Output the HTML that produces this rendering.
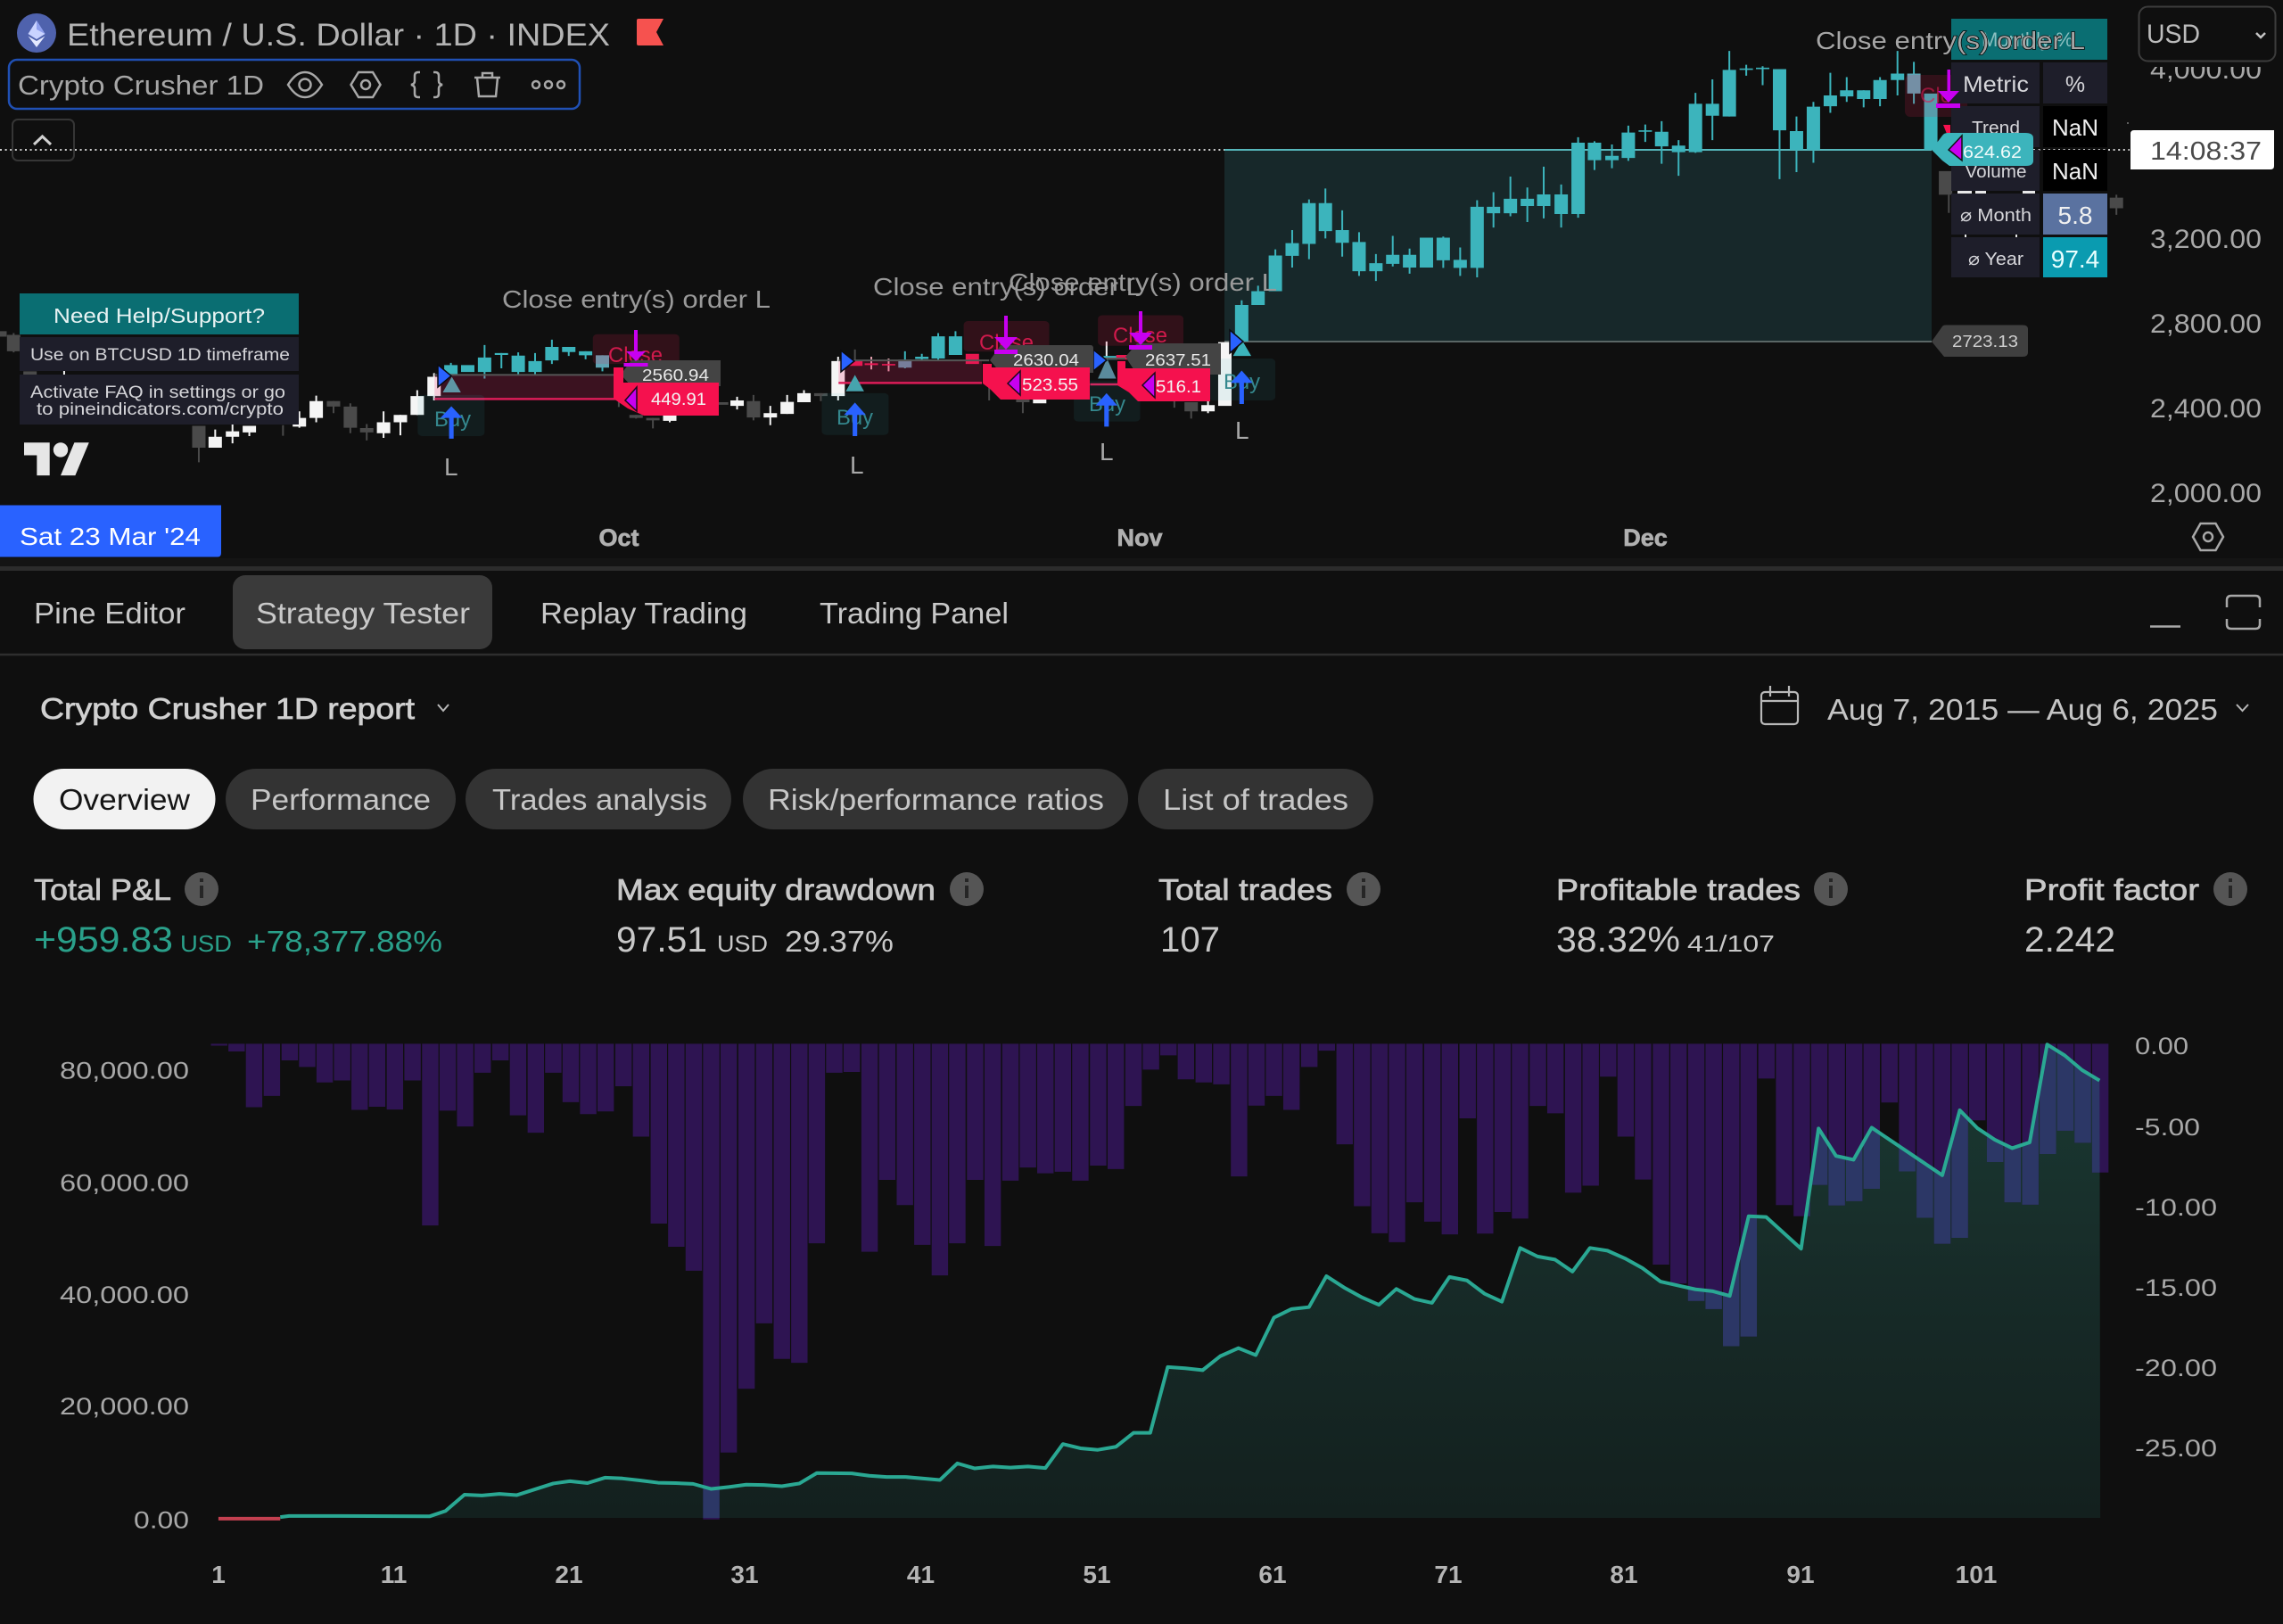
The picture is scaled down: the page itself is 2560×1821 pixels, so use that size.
<!DOCTYPE html>
<html lang="en"><head><meta charset="utf-8"><title>Ethereum Strategy Tester</title>
<style>
html,body{margin:0;padding:0;background:#0f0f0f;width:2560px;height:1821px;overflow:hidden}
svg{display:block}
text{font-family:"Liberation Sans",sans-serif}
.n{vector-effect:non-scaling-stroke;fill:none}
.ic{fill:none;stroke:#a8a8a8;stroke-width:2.5}
.semi{stroke-width:.7}
</style></head><body>
<svg xmlns="http://www.w3.org/2000/svg" width="2560" height="1821" viewBox="0 0 2560 1821">
<defs>
<linearGradient id="ag" x1="0" y1="0" x2="0" y2="1"><stop offset="0" stop-color="#1a3a33"/><stop offset=".5" stop-color="#172b28"/><stop offset="1" stop-color="#13201e"/></linearGradient>
<clipPath id="axisclip"><rect x="2380" y="75" width="180" height="560"/></clipPath>
<clipPath id="areaclip"><path d="M300 1296L385 1294 397 1291 445 1291 590 1292 612 1278 638 1236 662 1238 686 1234 710 1237 735 1222 760 1207 783 1201 807 1206 831 1192 855 1194 879 1199 904 1205 928 1206 952 1208 977 1221 1001 1216 1025 1210 1049 1211 1074 1214 1098 1207 1122 1180 1170 1181 1194 1187 1218 1190 1243 1190 1291 1198 1315 1155 1339 1168 1364 1163 1388 1166 1412 1163 1436 1167 1460 1105 1484 1116 1508 1120 1533 1112 1557 1076 1580 1076 1604 906 1628 909 1652 914 1676 878 1701 857 1725 875 1750 778 1774 756 1798 751 1822 671 1846 700 1870 725 1894 745 1918 704 1943 730 1967 740 1991 673 2015 682 2039 716 2063 737 2088 598 2112 620 2136 628 2160 659 2184 598 2208 605 2232 625 2256 650 2281 685 2305 695 2329 705 2353 710 2376 722 2402 516 2426 518 2474 600 2498 289 2522 360 2546 370 2571 287 2668 410 2692 242 2716 288 2740 318 2764 340 2788 325 2812 72 2836 100 2860 138 2884 165 2885 1296Z"/></clipPath>
</defs>
<rect width="2560" height="1821" fill="#0f0f0f"/>

<!-- profit zone -->
<rect x="1373" y="168" width="793" height="215" fill="#17282a"/>
<path d="M1373 168H2166" stroke="#56b6bb" stroke-width="2"/>
<path d="M1373 383H2166" stroke="#5a6665" stroke-width="2"/>
<path d="M0 168H1373" stroke="#d0d0d0" stroke-width="2" stroke-dasharray="2 3.6"/>
<path d="M2280 168H2388" stroke="#d0d0d0" stroke-width="2" stroke-dasharray="2 3.6"/>

<!-- candles section 1 -->
<g transform="scale(.5102 .40816)">
<path class="n" stroke="#4a4a4a" stroke-width="2" d="M30 915V968M437 1170V1270M622 1168V1197M733 1102V1135M770 1108V1190M806 1165V1210M1398 1140V1150M1435 1148V1177M1360 1100V1118"/>
<path class="n" stroke="#4a4a4a" stroke-width="15" d="M30 920V965M0 910V925M66 1020V1030M437 1170V1230M733 1102V1117M770 1117V1175M806 1176V1188M1398 1140V1148M1435 1148V1155"/>
<path class="n" stroke="#f5f5f5" stroke-width="2" d="M141 1018V1030M473 1180V1230M511 1165V1218M548 1170V1198M658 1130V1175M695 1087V1160M843 1130V1203M880 1140V1196M917 1072V1140M954 1025V1100M1472 1140V1160"/>
<path class="n" stroke="#f5f5f5" stroke-width="15" d="M473 1200V1230M511 1185V1200M548 1170V1188M658 1148V1172M695 1102V1148M843 1160V1190M880 1140V1160M917 1088V1140M954 1035V1088M1472 1140V1156"/>
<path class="n" stroke="#3cb4bc" stroke-width="2" d="M991 997V1030M1065 948V1040M1102 970V1012M1139 968V1030M1176 970V1028M1213 933V1000M1250 953V978M1287 965V987M1324 976V1020"/>
<path class="n" stroke="#3cb4bc" stroke-width="15" d="M991 1003V1028M1028 1003V1022M1065 982V1022M1102 970V975M1139 977V1022M1176 992V1022M1213 953V990M1250 953V967M1287 965V976"/>
<path class="n" stroke="#5fa5b5" stroke-width="15" d="M1324 976V1010"/>
</g>
<!-- candles section 2 -->
<g transform="translate(800 0) scale(.5102 .40816)">
<path class="n" stroke="#4a4a4a" stroke-width="2" d="M88 1085V1155M236 1080V1102M311 960V1000M606 1050V1100M680 1095V1135M1013 1100V1120M1050 1105V1150"/>
<path class="n" stroke="#4a4a4a" stroke-width="15" d="M18 1105V1112M88 1102V1147M236 1080V1088M680 1095V1105M1050 1105V1130"/>
<path class="n" stroke="#f5f5f5" stroke-width="2" d="M52 1090V1125M125 1115V1168M162 1085V1137M199 1072V1105M274 980V1100M864 938V980M1087 1100V1135"/>
<path class="n" stroke="#e3a0ae" stroke-width="2" d="M347 980V1015M385 985V1020"/>
<path class="n" stroke="#e8174f" stroke-width="15" d="M347 998V1003M385 1000V1004M313 992V1005"/>
<path class="n" stroke="#f5f5f5" stroke-width="15" d="M52 1100V1115M125 1135V1147M162 1104V1137M199 1080V1105M274 992V1088M717 1097V1108M1087 1113V1130M1124 940V1115"/>
<path class="n" stroke="#3cb4bc" stroke-width="2" d="M458 972V992M494 915V990M532 910V975M1161 825V838M1197 785V838M1235 685V800M1272 632V735M1309 548V712M1345 518V655M1382 578V705M1419 638V758M1456 698V772M1493 648V732M1530 683V752M421 965V1012"/>
<path class="n" stroke="#3cb4bc" stroke-width="15" d="M458 980V986M494 924V985M532 924V975M872 978V988M1161 838V938M1197 800V838M1235 702V800M1272 668V703M1309 558V670M1345 558V635M1382 632V667M1419 665V745M1456 723V745M1493 700V725M1530 700V735M1567 653V735"/>
<path class="n" stroke="#5a96a8" stroke-width="15" d="M421 988V1010"/>
<path class="n" stroke="#e8174f" stroke-width="15" d="M569 972V1000M900 975V988"/>
</g>
<!-- candles section 3 -->
<g transform="translate(1600 0) scale(.6122 .40816)">
<path class="n" stroke="#4a4a4a" stroke-width="2" d="M956 535V585M1263 535V590"/>
<path class="n" stroke="#4a4a4a" stroke-width="15" d="M950 470V535M1263 543V572"/>
<path class="n" stroke="#3cb4bc" stroke-width="2" d="M30 650V736M61 680V758M92 550V762M122 528V625M153 485V594M184 515V610M214 458V600M246 507V625M277 377V598M307 388V467M339 397V462M369 345V442M400 342V390M430 333V450M461 385V483M492 255V420M523 218V385M554 140V320M585 178V208M615 182V234M646 190V492M677 320V473M708 280V447M739 200V310M769 212V280M800 248V295M830 212V292M862 140V262M892 170V285"/>
<path class="n" stroke="#3cb4bc" stroke-width="15" d="M30 653V715M61 714V736M92 568V736M122 568V586M153 546V586M184 546V566M214 534V566M246 534V588M277 392V588M307 392V440M339 428V440M369 364V434M400 358V362M430 362V402M461 400V418M492 285V418M523 285V318M554 192V320M585 188V192M615 186V190M646 190V358M677 360V412M708 293V412M739 262V292M769 248V265M800 248V272M830 220V272M862 202V220M923 257V412"/>
<path class="n" stroke="#5fa5b5" stroke-width="15" d="M892 202V257"/>
</g>
<circle cx="2386" cy="138" r="1" fill="#777"/>

<!-- trade 1 overlay -->
<g transform="scale(.5102 .40816)">
<rect x="955" y="1030" width="405" height="66" fill="#e91e63" fill-opacity=".2"/>
<path class="n" stroke="#555" stroke-width="2" d="M955 1030H1365"/>
<path class="n" stroke="#dd1c58" stroke-width="2.5" d="M955 1096H1360"/>
<rect x="1303" y="918" width="190" height="82" rx="10" fill="#e91e50" fill-opacity=".16"/>
<rect x="918" y="1085" width="147" height="113" rx="10" fill="#3cb4bc" fill-opacity=".09"/>
</g>
<g transform="translate(800 0) scale(.5102 .40816)">
<rect x="275" y="990" width="315" height="62" fill="#e91e63" fill-opacity=".2"/>
<path class="n" stroke="#555" stroke-width="2" d="M275 990H606M860 985H905"/>
<path class="n" stroke="#dd1c58" stroke-width="2.5" d="M275 1052H590M828 1056H890"/>
<rect x="550" y="882" width="188" height="84" rx="10" fill="#e91e50" fill-opacity=".16"/>
<rect x="845" y="866" width="188" height="84" rx="10" fill="#e91e50" fill-opacity=".16"/>
<rect x="238" y="1080" width="147" height="115" rx="10" fill="#3cb4bc" fill-opacity=".09"/>
<rect x="792" y="1045" width="146" height="113" rx="10" fill="#3cb4bc" fill-opacity=".09"/>
<rect x="1088" y="985" width="147" height="115" rx="10" fill="#3cb4bc" fill-opacity=".09"/>
</g>

<!-- Close / Buy text -->
<g fill="#d01a4c" font-size="24">
<text x="682" y="406" textLength="61" lengthAdjust="spacingAndGlyphs">Close</text>
<text x="1098" y="392" textLength="61" lengthAdjust="spacingAndGlyphs">Close</text>
<text x="1248" y="384" textLength="61" lengthAdjust="spacingAndGlyphs">Close</text>
</g>
<g fill="#35888e" font-size="24">
<text x="487" y="478" textLength="41" lengthAdjust="spacingAndGlyphs">Buy</text>
<text x="938" y="476" textLength="41" lengthAdjust="spacingAndGlyphs">Buy</text>
<text x="1221" y="461" textLength="41" lengthAdjust="spacingAndGlyphs">Buy</text>
<text x="1372" y="436" textLength="41" lengthAdjust="spacingAndGlyphs">Buy</text>
</g>

<!-- teal up triangles -->
<g transform="scale(.5102 .40816)"><path d="M993 1035L1013 1078H973Z" fill="#5e97a5"/></g>
<g transform="translate(800 0) scale(.5102 .40816)">
<path d="M311 1030L331 1075H291Z" fill="#46a4ae"/>
<path d="M865 985L885 1040H845Z" fill="#5a8a9c"/>
<path d="M1162 935L1182 978H1142Z" fill="#3cb4bc"/>
</g>
<!-- Blue entry arrows -->
<g fill="#2962ff">
<g transform="scale(.5102 .40816)"><path d="M987 1205V1148H968L992 1116L1016 1148H997V1205Z"/></g>
<g transform="translate(800 0) scale(.5102 .40816)">
<path d="M306 1198V1140H287L311 1106L335 1140H316V1198Z"/>
<path d="M859 1172V1114H840L864 1080L888 1114H869V1172Z"/>
<path d="M1156 1110V1052H1137L1161 1018L1185 1052H1166V1110Z"/>
</g>
</g>
<!-- Blue right triangles -->
<g fill="#2962ff" stroke="#0b0b0f" stroke-width="1.5">
<path d="M491 409L506 421.500L491 434Z"/>
<path d="M943 393L958 405L943 417Z"/>
<path d="M1226 392L1241 404L1226 416Z"/>
<path d="M1379 370L1394 383L1379 396Z"/>
</g>

<!-- gray labels -->
<g fill="#444">
<path d="M696 420L708 404H808V433H708Z"/>
<path d="M1110 404L1122 387H1223Q1226 387 1226 391V418H1122Z"/>
<path d="M1262 400L1275 385H1369V420H1275Z"/>
</g>
<g fill="#e8e8e8" font-size="18">
<text x="720" y="427" textLength="75" lengthAdjust="spacingAndGlyphs">2560.94</text>
<text x="1136" y="410" textLength="74" lengthAdjust="spacingAndGlyphs">2630.04</text>
<text x="1284" y="410" textLength="74" lengthAdjust="spacingAndGlyphs">2637.51</text>
</g>
<!-- red labels -->
<g fill="#f5114e">
<path d="M688 412H699V429H806V466H722L704 458L688 447Z"/>
<path d="M1102 408H1112V412H1222V448H1122L1110 436L1102 430Z"/>
<path d="M1253 405H1262V413H1357V450H1276L1266 440L1253 432Z"/>
</g>
<!-- magenta stuff -->
<g fill="#c800f0" stroke="#1a0a1a" stroke-width="1.5">
<path d="M714 434L701 449L714 461Z"/>
<path d="M1144 416L1130 430L1144 443Z"/>
<path d="M1295 418L1281 432L1295 446Z"/>
</g>
<g fill="#f4f4f4" font-size="19">
<text x="730" y="454" textLength="62" lengthAdjust="spacingAndGlyphs">449.91</text>
<text x="1146" y="438" textLength="63" lengthAdjust="spacingAndGlyphs">523.55</text>
<text x="1296" y="440" textLength="51" lengthAdjust="spacingAndGlyphs">516.1</text>
</g>
<g fill="#c800f0">
<path d="M711 370h4v24h9l-11 11-11-11h9Z"/>
<path d="M699.500 407h27v4h-27Z"/>
<path d="M1126 354h4v24h11l-13 14-13-14h11Z"/>
<path d="M1115 392h26v5h-26Z"/>
<path d="M1277 349h4v24h11l-13 14-13-14h11Z"/>
<path d="M1266 387h26v5h-26Z"/>
</g>

<!-- close 4 background -->
<rect x="2136" y="84" width="70" height="47" rx="6" fill="#e91e50" fill-opacity=".16"/>
<text x="2153" y="115" fill="#d81b50" fill-opacity=".6" font-size="24">Close</text>
<path d="M2179 140H2187V151L2183 150Z" fill="#f5114e"/>

<!-- L labels -->
<g fill="#a8a8a8" font-size="28">
<text x="498" y="533">L</text>
<text x="953" y="531">L</text>
<text x="1233" y="516">L</text>
<text x="1385" y="492">L</text>
</g>
<!-- Close entry labels -->
<g fill="#9a9a9a" font-size="28">
<text x="563" y="345" textLength="301" lengthAdjust="spacingAndGlyphs">Close entry(s) order L</text>
<text x="979" y="331" textLength="301" lengthAdjust="spacingAndGlyphs">Close entry(s) order L</text>
<text x="1131" y="326" textLength="301" lengthAdjust="spacingAndGlyphs">Close entry(s) order L</text>
</g>

<!-- help panel -->
<rect x="22" y="329" width="313" height="46" fill="#0a6e72"/>
<text x="60" y="362" fill="#e6f2f2" font-size="23" textLength="237" lengthAdjust="spacingAndGlyphs">Need Help/Support?</text>
<rect x="22" y="378" width="313" height="38" fill="#1e1e2a"/>
<text x="34" y="404" fill="#d4d4d8" font-size="19" textLength="291" lengthAdjust="spacingAndGlyphs">Use on BTCUSD 1D timeframe</text>
<rect x="22" y="420" width="313" height="56" fill="#1e1e2a"/>
<text x="34" y="446" fill="#d4d4d8" font-size="19" textLength="286" lengthAdjust="spacingAndGlyphs">Activate FAQ in settings or go</text>
<text x="41" y="465" fill="#d4d4d8" font-size="19" textLength="277" lengthAdjust="spacingAndGlyphs">to pineindicators.com/crypto</text>

<!-- TV logo -->
<g transform="translate(27 488) scale(2.05)" fill="#e6e6e6"><path d="M14 22H7V11H0V4h14v18zM28 22h-8l7.500-18h8L28 22z"/><circle cx="20" cy="8" r="4"/></g>

<!-- date tag, axis -->
<path d="M0 566.500H248V620Q248 624.500 244 624.500H0Z" fill="#2962ff"/>
<text x="22" y="611" fill="#fff" font-size="28" textLength="203" lengthAdjust="spacingAndGlyphs">Sat 23 Mar '24</text>
<g fill="#b0b0b0" stroke="#b0b0b0" class="semi" font-size="27" font-weight="700" text-anchor="middle">
<text x="694" y="612">Oct</text><text x="1278" y="612">Nov</text><text x="1845" y="612">Dec</text>
</g>

<!-- header -->
<circle cx="41" cy="37" r="22" fill="#4f62ad"/>
<path d="M41 23L50.500 38L41 44L31.500 38Z" fill="#c9d3ff"/>
<path d="M41 23L50.500 38L41 33Z" fill="#8fa0ee"/>
<path d="M41 46L50.500 40.500L41 53L31.500 40.500Z" fill="#e4e9ff"/>
<text x="75" y="51" fill="#b4b4b4" font-size="35" textLength="609" lengthAdjust="spacingAndGlyphs">Ethereum / U.S. Dollar · 1D · INDEX</text>
<path d="M716 21H744L736 36L744 51H716Q714 51 714 49V23Q714 21 716 21Z" fill="#f6524f"/>

<rect x="10" y="67" width="640" height="55" rx="9" fill="#0f0f0f" stroke="#2050b4" stroke-width="2.500"/>
<text x="20" y="106" fill="#a6a6a6" font-size="31" textLength="276" lengthAdjust="spacingAndGlyphs">Crypto Crusher 1D</text>
<path class="ic" d="M323 95C330 84 336 81 342 81S354 84 361 95C354 106 348 109 342 109S330 106 323 95Z"/><circle class="ic" cx="342" cy="95" r="6.500"/>
<path class="ic" d="M393.500 95L402 81H418L426.500 95L418 109H402Z"/><circle class="ic" cx="410" cy="95" r="5"/>
<path class="ic" d="M471 81h-2q-4 0-4 4v6q0 3-4 4q4 1 4 4v6q0 4 4 4h2M486 81h2q4 0 4 4v6q0 3 4 4q-4 1-4 4v6q0 4-4 4h-2"/>
<path class="ic" d="M532 87H561M541 87V82H552V87M535 87L537 108H556L558 87"/>
<circle class="ic" cx="601" cy="95" r="4"/><circle class="ic" cx="615" cy="95" r="4"/><circle class="ic" cx="629" cy="95" r="4"/>

<rect x="14" y="134" width="69" height="46" rx="6" fill="none" stroke="#363636" stroke-width="2"/>
<path d="M38 162L47.500 153L57 162" fill="none" stroke="#d0d0d0" stroke-width="3"/>

<!-- right axis -->
<g fill="#a8a8a8" font-size="30" clip-path="url(#axisclip)">
<text x="2411" y="88" textLength="125" lengthAdjust="spacingAndGlyphs">4,000.00</text>
<text x="2411" y="278" textLength="125" lengthAdjust="spacingAndGlyphs">3,200.00</text>
<text x="2411" y="373" textLength="125" lengthAdjust="spacingAndGlyphs">2,800.00</text>
<text x="2411" y="468" textLength="125" lengthAdjust="spacingAndGlyphs">2,400.00</text>
<text x="2411" y="563" textLength="125" lengthAdjust="spacingAndGlyphs">2,000.00</text>
</g>
<rect x="2398.500" y="7.500" width="153" height="61" rx="10" fill="#0f0f0f" stroke="#3c3c3c" stroke-width="2"/>
<text x="2407" y="48" fill="#bcbcbc" font-size="30" textLength="60" lengthAdjust="spacingAndGlyphs">USD</text>
<path d="M2530 37L2535 42L2540 37" fill="none" stroke="#c4c4c4" stroke-width="2.500"/>
<path d="M2389 150Q2389 146 2393 146H2550V186Q2550 190 2546 190H2389Z" fill="#fff"/>
<text x="2411" y="179" fill="#4a4a4a" font-size="29" textLength="125" lengthAdjust="spacingAndGlyphs">14:08:37</text>
<path class="ic" d="M2459 602L2467.500 587H2484.500L2493 602L2484.500 617H2467.500Z"/><circle class="ic" cx="2476" cy="602" r="5"/>

<!-- table -->
<rect x="2188" y="21" width="175" height="46" fill="#0a6e72"/>
<text x="2222" y="52" fill="#b8dcdc" fill-opacity=".75" font-size="22">Monthly %</text>
<g fill="#1e1e2a">
<rect x="2188" y="70" width="99" height="46"/><rect x="2291" y="70" width="72" height="46"/>
<rect x="2188" y="119" width="99" height="46"/><rect x="2188" y="168" width="99" height="46"/>
<rect x="2188" y="217" width="99" height="46"/><rect x="2188" y="266" width="99" height="45"/>
</g>
<rect x="2291" y="119" width="72" height="46" fill="#000"/><rect x="2291" y="168" width="72" height="46" fill="#000"/>
<rect x="2291" y="217" width="72" height="46" fill="#5a72a0"/><rect x="2291" y="266" width="72" height="45" fill="#0a9bb0"/>
<path d="M2195 214h16v3h-16ZM2215 214h12v3h-12ZM2268 214h14v3h-14ZM2203 263h2v3h-2ZM2260 263h2v3h-2Z" fill="#e8e8e8"/>
<g fill="#d6d6da" text-anchor="middle">
<text x="2238" y="103" font-size="25" textLength="74" lengthAdjust="spacingAndGlyphs">Metric</text>
<text x="2327" y="103" font-size="25">%</text>
<text x="2238" y="150" font-size="20" textLength="54" lengthAdjust="spacingAndGlyphs">Trend</text>
<text x="2238" y="199" font-size="20" textLength="69" lengthAdjust="spacingAndGlyphs">Volume</text>
<text x="2238" y="248" font-size="20" textLength="80" lengthAdjust="spacingAndGlyphs">⌀ Month</text>
<text x="2238" y="297" font-size="20" textLength="62" lengthAdjust="spacingAndGlyphs">⌀ Year</text>
<text x="2327" y="152" font-size="26" fill="#f0f0f0">NaN</text>
<text x="2327" y="201" font-size="26" fill="#f0f0f0">NaN</text>
<text x="2327" y="251" font-size="28" fill="#f0f0f0">5.8</text>
<text x="2327" y="300" font-size="28" fill="#e8ffff">97.4</text>
</g>

<!-- top callouts -->
<path d="M2183.500 78h3.500v24h10l-12 13-12-13h10.500Z" fill="#c800f0"/>
<path d="M2171 116h27v5h-27Z" fill="#c800f0"/>
<path d="M2166 168L2178 152Q2180 149 2184 149H2271Q2280 149 2280 155V180Q2280 186 2272 186H2186L2178 180Z" fill="#3cb4bc"/>
<path d="M2200 152L2185 168L2200 180Z" fill="#c800f0" stroke="#111" stroke-width="1.500"/>
<text x="2201" y="177" fill="#f0fbfb" font-size="19" textLength="66" lengthAdjust="spacingAndGlyphs">624.62</text>
<path d="M2166 383L2178 366Q2179 364.500 2182 364.500H2268Q2274 364.500 2274 369V395Q2274 400 2268 400H2180Z" fill="#3f3f3f"/>
<text x="2189" y="389" fill="#d0d0d0" font-size="18" textLength="74" lengthAdjust="spacingAndGlyphs">2723.13</text>
<text x="2036" y="55" fill="#a6a6a6" stroke="#0a0a0a" stroke-width="1.500" paint-order="stroke" font-size="28" textLength="302" lengthAdjust="spacingAndGlyphs">Close entry(s) order L</text>

<!-- divider -->
<rect x="0" y="626" width="2560" height="9" fill="#141414"/>
<rect x="0" y="635" width="2560" height="5" fill="#2c2c2c"/>

<!-- tabs -->
<rect x="261" y="645" width="291" height="83" rx="14" fill="#3a3a3a"/>
<path d="M0 734H2560" stroke="#2e2e2e" stroke-width="2.500"/>
<g fill="#c8c8c8" font-size="33">
<text x="38" y="699" textLength="170" lengthAdjust="spacingAndGlyphs">Pine Editor</text>
<text x="287" y="699" textLength="240" lengthAdjust="spacingAndGlyphs">Strategy Tester</text>
<text x="606" y="699" textLength="232" lengthAdjust="spacingAndGlyphs">Replay Trading</text>
<text x="919" y="699" textLength="212" lengthAdjust="spacingAndGlyphs">Trading Panel</text>
</g>
<path d="M2411 702.500H2445" stroke="#a8a8a8" stroke-width="2.500"/>
<path class="ic" d="M2497 681V673Q2497 668 2502 668H2529Q2534 668 2534 673V681M2497 694V700Q2497 705 2502 705H2529Q2534 705 2534 700V694"/>

<text x="45" y="806" fill="#d0d0d0" stroke="#d0d0d0" class="semi" font-size="33" textLength="420" lengthAdjust="spacingAndGlyphs">Crypto Crusher 1D report</text>
<path d="M491 790L497 797L503 790" fill="none" stroke="#b8b8b8" stroke-width="2"/>
<rect x="1975" y="776" width="41" height="36" rx="4" fill="none" stroke="#b8b8b8" stroke-width="2.200"/>
<path d="M1975 786H2016M1985 769V781M2006 769V781" stroke="#b8b8b8" stroke-width="2.200"/>
<text x="2049" y="807" fill="#c4c4c4" font-size="33" textLength="438" lengthAdjust="spacingAndGlyphs">Aug 7, 2015 — Aug 6, 2025</text>
<path d="M2508 790L2514.500 797L2521 790" fill="none" stroke="#b8b8b8" stroke-width="2"/>

<!-- pills -->
<rect x="37.500" y="862" width="204" height="68" rx="34" fill="#f2f2f2"/>
<g fill="#333"><rect x="253" y="862" width="258" height="68" rx="34"/><rect x="522" y="862" width="298" height="68" rx="34"/><rect x="833" y="862" width="432" height="68" rx="34"/><rect x="1276" y="862" width="264" height="68" rx="34"/></g>
<text x="66" y="908" fill="#141414" font-size="33" textLength="147" lengthAdjust="spacingAndGlyphs">Overview</text>
<g fill="#c6c6c6" font-size="33">
<text x="281" y="908" textLength="202" lengthAdjust="spacingAndGlyphs">Performance</text>
<text x="552" y="908" textLength="241" lengthAdjust="spacingAndGlyphs">Trades analysis</text>
<text x="861" y="908" textLength="377" lengthAdjust="spacingAndGlyphs">Risk/performance ratios</text>
<text x="1304" y="908" textLength="208" lengthAdjust="spacingAndGlyphs">List of trades</text>
</g>

<!-- stats -->
<g fill="#c8c8c8" stroke="#c8c8c8" class="semi" font-size="33">
<text x="38" y="1009" textLength="154" lengthAdjust="spacingAndGlyphs">Total P&amp;L</text>
<text x="691" y="1009" textLength="358" lengthAdjust="spacingAndGlyphs">Max equity drawdown</text>
<text x="1299" y="1009" textLength="195" lengthAdjust="spacingAndGlyphs">Total trades</text>
<text x="1745" y="1009" textLength="274" lengthAdjust="spacingAndGlyphs">Profitable trades</text>
<text x="2270" y="1009" textLength="196" lengthAdjust="spacingAndGlyphs">Profit factor</text>
</g>
<g fill="#555">
<circle cx="226" cy="997" r="19"/><circle cx="1084" cy="997" r="19"/><circle cx="1529" cy="997" r="19"/><circle cx="2053" cy="997" r="19"/><circle cx="2501" cy="997" r="19"/>
</g>
<g fill="#262626">
<path d="M224 993h4v14h-4ZM224 985h4v4h-4Z"/><path d="M1082 993h4v14h-4ZM1082 985h4v4h-4Z"/><path d="M1527 993h4v14h-4ZM1527 985h4v4h-4Z"/><path d="M2051 993h4v14h-4ZM2051 985h4v4h-4Z"/><path d="M2499 993h4v14h-4ZM2499 985h4v4h-4Z"/>
</g>
<g fill="#2aa08a">
<text x="38" y="1067" font-size="40" textLength="156" lengthAdjust="spacingAndGlyphs">+959.83</text>
<text x="202" y="1067" font-size="26" textLength="58" lengthAdjust="spacingAndGlyphs">USD</text>
<text x="277" y="1067" font-size="33" textLength="219" lengthAdjust="spacingAndGlyphs">+78,377.88%</text>
</g>
<g fill="#c8c8c8">
<text x="691" y="1067" font-size="40" textLength="102" lengthAdjust="spacingAndGlyphs">97.51</text>
<text x="804" y="1067" font-size="26" textLength="57" lengthAdjust="spacingAndGlyphs">USD</text>
<text x="880" y="1067" font-size="33" textLength="122" lengthAdjust="spacingAndGlyphs">29.37%</text>
<text x="1301" y="1067" font-size="40" textLength="67" lengthAdjust="spacingAndGlyphs">107</text>
<text x="1745" y="1067" font-size="40" textLength="139" lengthAdjust="spacingAndGlyphs">38.32%</text>
<text x="1892" y="1067" font-size="26" textLength="98" lengthAdjust="spacingAndGlyphs">41/107</text>
<text x="2270" y="1067" font-size="40" textLength="102" lengthAdjust="spacingAndGlyphs">2.242</text>
</g>

<!-- chart -->
<g transform="translate(0 1140) scale(.81633 .43367)">
<path d="M300 1296L385 1294 397 1291 445 1291 590 1292 612 1278 638 1236 662 1238 686 1234 710 1237 735 1222 760 1207 783 1201 807 1206 831 1192 855 1194 879 1199 904 1205 928 1206 952 1208 977 1221 1001 1216 1025 1210 1049 1211 1074 1214 1098 1207 1122 1180 1170 1181 1194 1187 1218 1190 1243 1190 1291 1198 1315 1155 1339 1168 1364 1163 1388 1166 1412 1163 1436 1167 1460 1105 1484 1116 1508 1120 1533 1112 1557 1076 1580 1076 1604 906 1628 909 1652 914 1676 878 1701 857 1725 875 1750 778 1774 756 1798 751 1822 671 1846 700 1870 725 1894 745 1918 704 1943 730 1967 740 1991 673 2015 682 2039 716 2063 737 2088 598 2112 620 2136 628 2160 659 2184 598 2208 605 2232 625 2256 650 2281 685 2305 695 2329 705 2353 710 2376 722 2402 516 2426 518 2474 600 2498 289 2522 360 2546 370 2571 287 2668 410 2692 242 2716 288 2740 318 2764 340 2788 325 2812 72 2836 100 2860 138 2884 165 2885 1296Z" fill="url(#ag)"/>
<path class="n" stroke="#2e1452" stroke-width="18.400" d="M301 70V75M325 70V90M349 70V234M373.500 70V205M398 70V113M422 70V130M446 70V170M470 70V165M494 70V241M518 70V233M542.500 70V240M566.700 70V165M591 70V540M615 70V243M639 70V284M663 70V145M687.400 70V113M711.600 70V255M736 70V300M760 70V145M784 70V221M808 70V252M832 70V245M856.500 70V180M880.600 70V310M905 70V535M929 70V595M953 70V657M977 70V1300M1001 70V1127M1025.500 70V962M1049.700 70V793M1074 70V885M1098 70V895M1122 70V586M1146 70V145M1170 70V143M1194.500 70V608M1218.700 70V422M1243 70V487M1267 70V590M1291 70V669M1315 70V586M1339.500 70V422M1363.600 70V593M1388 70V424M1412 70V390M1436 70V405M1460 70V401M1484 70V424M1508.500 70V385M1532.700 70V394M1557 70V231M1581 70V137M1605 70V100M1629 70V162M1653.500 70V170M1677.700 70V175M1702 70V413M1726 70V230M1750 70V205M1774 70V241M1798.500 70V130M1822.600 70V88M1847 70V330M1871 70V490M1895 70V560M1919 70V583M1943 70V480M1967.500 70V530M1991.600 70V563M2016 70V263M2040 70V561M2064 70V505M2088 70V522M2112.500 70V231M2136.600 70V250M2161 70V455M2185 70V437M2209 70V155M2233 70V310M2257 70V421M2281.600 70V641M2305.700 70V690M2330 70V735M2354 70V756M2378 70V852M2402 70V827M2426.500 70V160M2450.700 70V487M2475 70V516M2499 70V435M2523 70V488M2547 70V477M2571 70V445M2595.500 70V222M2619.700 70V400M2644 70V520M2668 70V587M2692 70V572M2716 70V268M2740.500 70V376M2764.600 70V480M2789 70V486M2813 70V355M2837 70V295M2861 70V326M2885 70V403"/>
<g clip-path="url(#areaclip)">
<path class="n" stroke="#2c3766" stroke-width="18.400" d="M977 70V1300M1001 70V1127M2305.700 70V690M2330 70V735M2354 70V756M2378 70V852M2402 70V827M2475 70V516M2499 70V435M2523 70V488M2547 70V477M2571 70V445M2595.500 70V222M2619.700 70V400M2644 70V520M2668 70V587M2692 70V572M2716 70V268M2740.500 70V376M2764.600 70V480M2789 70V486M2813 70V355M2837 70V295M2861 70V326M2885 70V403"/>
</g>
<path class="n" stroke="#c44050" stroke-width="4" d="M300 1298H385"/>
<path class="n" stroke="#2aa893" stroke-width="4" stroke-linejoin="round" d="M385 1294L397 1291 445 1291 590 1292 612 1278 638 1236 662 1238 686 1234 710 1237 735 1222 760 1207 783 1201 807 1206 831 1192 855 1194 879 1199 904 1205 928 1206 952 1208 977 1221 1001 1216 1025 1210 1049 1211 1074 1214 1098 1207 1122 1180 1170 1181 1194 1187 1218 1190 1243 1190 1291 1198 1315 1155 1339 1168 1364 1163 1388 1166 1412 1163 1436 1167 1460 1105 1484 1116 1508 1120 1533 1112 1557 1076 1580 1076 1604 906 1628 909 1652 914 1676 878 1701 857 1725 875 1750 778 1774 756 1798 751 1822 671 1846 700 1870 725 1894 745 1918 704 1943 730 1967 740 1991 673 2015 682 2039 716 2063 737 2088 598 2112 620 2136 628 2160 659 2184 598 2208 605 2232 625 2256 650 2281 685 2305 695 2329 705 2353 710 2376 722 2402 516 2426 518 2474 600 2498 289 2522 360 2546 370 2571 287 2668 410 2692 242 2716 288 2740 318 2764 340 2788 325 2812 72 2836 100 2860 138 2884 165"/>
</g>

<!-- chart axes -->
<g fill="#a8a8a8" font-size="27" text-anchor="end">
<text x="212" y="1209.500" textLength="145" lengthAdjust="spacingAndGlyphs">80,000.00</text>
<text x="212" y="1335.500" textLength="145" lengthAdjust="spacingAndGlyphs">60,000.00</text>
<text x="212" y="1461" textLength="145" lengthAdjust="spacingAndGlyphs">40,000.00</text>
<text x="212" y="1586" textLength="145" lengthAdjust="spacingAndGlyphs">20,000.00</text>
<text x="212" y="1713.500" textLength="62" lengthAdjust="spacingAndGlyphs">0.00</text>
</g>
<g fill="#a8a8a8" font-size="27">
<text x="2394" y="1182" textLength="60" lengthAdjust="spacingAndGlyphs">0.00</text>
<text x="2394" y="1273" textLength="73" lengthAdjust="spacingAndGlyphs">-5.00</text>
<text x="2394" y="1363" textLength="92" lengthAdjust="spacingAndGlyphs">-10.00</text>
<text x="2394" y="1453" textLength="92" lengthAdjust="spacingAndGlyphs">-15.00</text>
<text x="2394" y="1543" textLength="92" lengthAdjust="spacingAndGlyphs">-20.00</text>
<text x="2394" y="1633" textLength="92" lengthAdjust="spacingAndGlyphs">-25.00</text>
</g>
<g fill="#b4b4b4" font-weight="700" font-size="28" text-anchor="middle">
<text x="245" y="1775">1</text><text x="441.500" y="1775">11</text><text x="638" y="1775">21</text><text x="835" y="1775">31</text><text x="1032.500" y="1775">41</text><text x="1230" y="1775">51</text><text x="1427" y="1775">61</text><text x="1624" y="1775">71</text><text x="1821" y="1775">81</text><text x="2019" y="1775">91</text><text x="2216" y="1775">101</text>
</g>
</svg>
</body></html>
